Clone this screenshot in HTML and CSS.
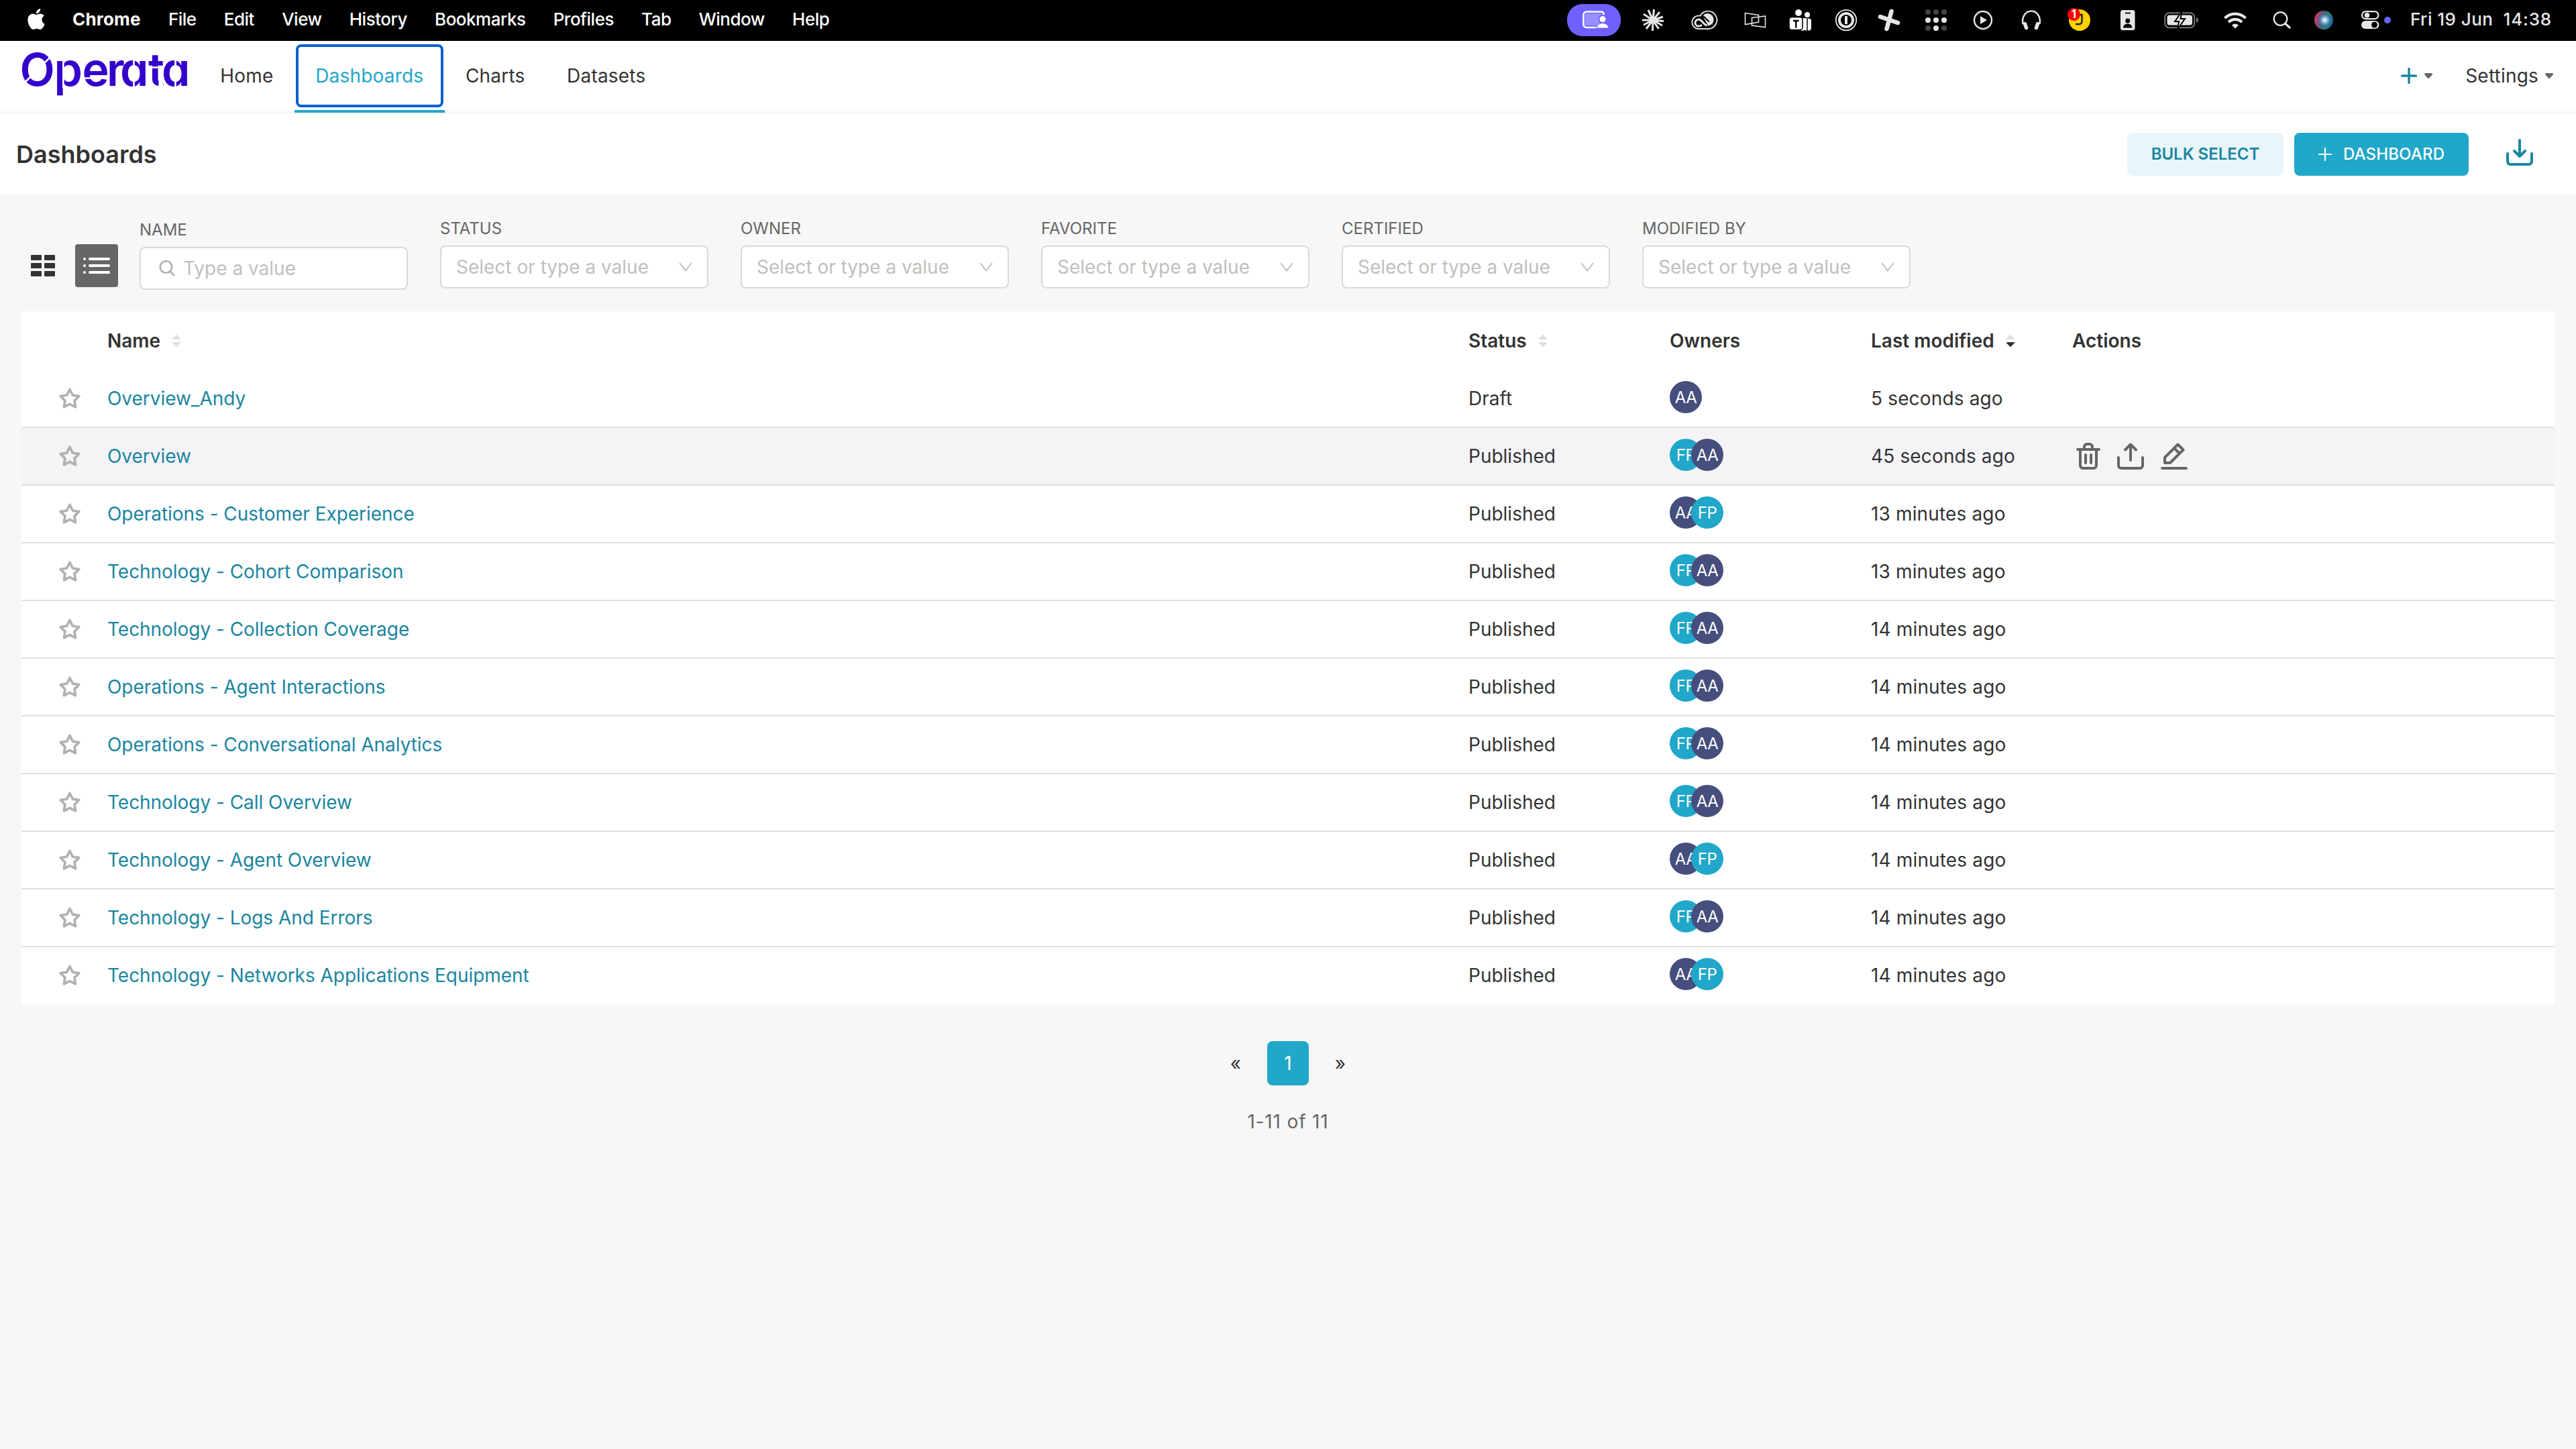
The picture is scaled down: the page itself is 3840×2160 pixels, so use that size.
FILE: index.html
```html
<!DOCTYPE html>
<html lang="en">
<head>
<meta charset="utf-8">
<title>Dashboards</title>
<link rel="stylesheet" href="styles.css">
</head>
<body>
<svg class="defs" aria-hidden="true">
  <symbol id="star" viewBox="0 0 32 32"><path d="M16 2.500 20.350 11.010 29.790 12.520 23.040 19.290 24.520 28.730 16 24.400 7.480 28.730 8.960 19.290 2.210 12.520 11.650 11.010Z" fill="none" stroke="#b2b2b2" stroke-width="3.800" stroke-linejoin="round"/></symbol>
  <symbol id="caret" viewBox="0 0 12 8"><path d="M1.5 0h9a1.5 1.5 0 0 1 1 2.6L7 7.4a1.4 1.4 0 0 1-2 0L.5 2.6A1.5 1.5 0 0 1 1.5 0Z" fill="currentColor"/></symbol>
  <symbol id="sort" viewBox="0 0 12 18"><path class="up" d="M1.5 7h9a1 1 0 0 0 .8-2L7 .6a1.4 1.4 0 0 0-2 0L.7 5a1 1 0 0 0 .8 2Z"/><path class="down" d="M1.5 11h9a1 1 0 0 1 .8 2L7 17.4a1.4 1.4 0 0 1-2 0L.7 13a1 1 0 0 1 .8-2Z"/></symbol>
  <symbol id="chevron" viewBox="0 0 20 14"><path d="M1 1 10 12.5 19 1" fill="none" stroke="currentColor" stroke-width="2"/></symbol>
</svg>

<header class="menubar">
  <svg class="apple" viewBox="2 0 20 24"><path fill="#fff" d="M12.152 6.896c-.948 0-2.415-1.078-3.96-1.04-2.04.027-3.91 1.183-4.961 3.014-2.117 3.675-.546 9.103 1.519 12.09 1.013 1.454 2.208 3.09 3.792 3.039 1.52-.065 2.09-.987 3.935-.987 1.831 0 2.35.987 3.96.948 1.637-.026 2.676-1.48 3.676-2.948 1.156-1.688 1.636-3.325 1.662-3.415-.039-.013-3.182-1.221-3.22-4.857-.026-3.04 2.48-4.494 2.597-4.559-1.429-2.09-3.623-2.324-4.39-2.376-2-.156-3.675 1.09-4.61 1.09zM15.53 3.83c.843-1.012 1.4-2.427 1.245-3.83-1.207.052-2.662.805-3.532 1.818-.78.896-1.454 2.338-1.273 3.714 1.338.104 2.715-.688 3.559-1.701"/></svg>
  <nav class="menus">
    <b>Chrome</b><span>File</span><span>Edit</span><span>View</span><span>History</span><span>Bookmarks</span><span>Profiles</span><span>Tab</span><span>Window</span><span>Help</span>
  </nav>
  <div class="tray">
    <svg width="110" height="61" viewBox="2330 0 110 61">
      <rect x="2336" y="6" width="80" height="48" rx="23" fill="#7060ff"/>
      <path d="M2380 41h-15a4.500 4.500 0 0 1-4.500-4.500v-14.500a4.500 4.500 0 0 1 4.500-4.500h22a3.500 3.500 0 0 1 3.500 3.500v1.500" fill="none" stroke="#fff" stroke-width="2.600"/>
      <rect x="2363" y="20" width="24" height="18" fill="#988eff"/>
      <circle cx="2389" cy="28.500" r="5.600" fill="#fff" stroke="#7060ff" stroke-width="2"/>
      <path d="M2380 42c0-4 4-7.500 9-7.500s9 3.500 9 7.500Z" fill="#fff" stroke="#7060ff" stroke-width="1"/>
    </svg>
    <svg width="60" height="61" viewBox="2440 0 60 61"><path d="M2464 30 2457 15M2464 30 2465.500 14M2464 30 2474 18M2464 30 2479 25M2464 30 2480 31.500M2464 30 2478 38M2464 30 2472.500 43M2464 30 2463.500 46M2464 30 2454 43M2464 30 2450 37M2464 30 2448 30M2464 30 2450 21" stroke="#e6e6e6" stroke-width="3"/><circle cx="2464" cy="30" r="5" fill="#e6e6e6"/></svg>
    <svg width="82" height="61" viewBox="2500 0 82 61" fill="none" stroke="#e6e6e6">
      <path d="M2532 43a9.800 9.800 0 1 1 2.500-19.300A13.200 13.200 0 1 1 2547 43Z" stroke-width="1.900"/>
      <path d="M2538 23.500a9.300 9.300 0 1 1 8.500 15Z" fill="#e6e6e6" stroke="none"/>
      <path d="M2545 38c-5 0-7.500-9-13-9a5 5 0 0 0 0 10c2 0 3.500-.6 5-2" stroke-width="3"/>
      <path d="M2537 23c4 1 6 6 11 9.500" stroke="#000" stroke-width="2"/>
    </svg>
    <svg width="68" height="61" viewBox="2582 0 68 61" fill="none" stroke="#e6e6e6" stroke-width="1.600"><path d="M2601.500 19.500 2621.500 22.500V33L2601.500 36.500ZM2611.500 26.500 2631.500 24V40.500L2611.500 38Z"/></svg>
    <svg width="76" height="61" viewBox="2650 0 76 61" fill="#fff">
      <circle cx="2681" cy="19" r="5"/><circle cx="2694" cy="22" r="4"/>
      <rect x="2689" y="27.500" width="11" height="18" rx="4"/><path d="M2694 28v18" stroke="#000" stroke-width="1.500"/>
      <path d="M2676 27h16v14a4.500 4.500 0 0 1-4.500 4.500H2684Z"/>
      <rect x="2667" y="25.500" width="20" height="19" rx="4" stroke="#000" stroke-width="1.600"/>
      <path d="M2673 31h8.500M2677.200 31v10.500" stroke="#000" stroke-width="2.400"/>
    </svg>
    <svg width="60" height="61" viewBox="2726 0 60 61"><circle cx="2752" cy="30" r="15.200" fill="none" stroke="#e6e6e6" stroke-width="1.800"/><circle cx="2752" cy="30" r="12" fill="#e6e6e6"/><circle cx="2752" cy="30" r="8" fill="#000"/><rect x="2750" y="24" width="4" height="12" fill="#e6e6e6"/></svg>
    <svg width="66" height="61" viewBox="2786 0 66 61" stroke="#e6e6e6" stroke-width="6.500" stroke-linecap="round"><path d="M2819.500 17 2812.500 43M2803 25 2829 34"/></svg>
    <svg width="72" height="61" viewBox="2852 0 72 61" fill="#444"><circle cx="2874" cy="18" r="4"/><circle cx="2886" cy="18" r="4"/><circle cx="2898" cy="18" r="4"/><circle cx="2874" cy="42" r="4"/><circle cx="2898" cy="42" r="4"/><g fill="#e6e6e6"><circle cx="2874" cy="30" r="4"/><circle cx="2886" cy="30" r="4"/><circle cx="2898" cy="30" r="4"/><circle cx="2886" cy="42" r="4"/></g></svg>
    <svg width="68" height="61" viewBox="2924 0 68 61"><circle cx="2956" cy="30" r="13" fill="none" stroke="#e6e6e6" stroke-width="2.400"/><path d="M2952 24v12l10-6Z" fill="#e6e6e6"/></svg>
    <svg width="72" height="61" viewBox="2992 0 72 61" fill="none" stroke="#e6e6e6"><path d="M3015.500 36c-2-11 4-19.500 12.500-19.500s14.500 8.500 12.500 19.500" stroke-width="2.500"/><path d="M3018.500 35.500 3020.500 41.500M3037.500 35.500 3035.500 41.500" stroke-width="5.500" stroke-linecap="round"/></svg>
    <svg width="76" height="61" viewBox="3064 0 76 61"><circle cx="3100" cy="30" r="16" fill="#ffd200"/><path d="M3094 36h5.500a4 4 0 0 0 4-4V22h-5" fill="none" stroke="#222" stroke-width="2.500"/><circle cx="3091.500" cy="21.500" r="9.500" fill="#f00"/><text x="3091.300" y="27" class="badge">1</text></svg>
    <svg width="66" height="61" viewBox="3140 0 66 61"><rect x="3161" y="15" width="21.500" height="30" rx="3.500" fill="#e6e6e6"/><path d="M3168 19.500h8" stroke="#000" stroke-width="1.800"/><circle cx="3171.700" cy="31" r="3.500"/><path d="M3165 41.500c0-4 3-6 6.700-6s6.700 2 6.700 6Z"/></svg>
    <svg width="90" height="61" viewBox="3206 0 90 61"><rect x="3227.200" y="19.200" width="44" height="22" rx="6.500" fill="none" stroke="#777" stroke-width="2"/><path d="M3274 26v8c2-.5 3-2 3-4s-1-3.500-3-4Z" fill="#777"/><rect x="3230.500" y="22.500" width="37.500" height="15" rx="3.500" fill="#e6e6e6"/><path d="M3252.500 17 3242 32h6l-2 11.500 11-15.500h-6.500Z" fill="#e6e6e6" stroke="#000" stroke-width="2"/></svg>
    <svg width="74" height="61" viewBox="3296 0 74 61" fill="none" stroke="#e6e6e6" stroke-width="4.200"><path d="M3316.500 27a22 22 0 0 1 31 0M3322 33a14 14 0 0 1 20 0"/><path d="M3332 42.500l-5-5a7 7 0 0 1 10 0Z" fill="#e6e6e6" stroke="none"/></svg>
    <svg width="62" height="61" viewBox="3370 0 62 61" fill="none" stroke="#e6e6e6" stroke-linecap="round"><circle cx="3399.500" cy="28" r="9.800" stroke-width="2.300"/><path d="M3406.500 35 3413 41" stroke-width="3.200"/></svg>
    <svg width="68" height="61" viewBox="3432 0 68 61"><defs><radialGradient id="siri" cx=".52" cy=".5" r=".5"><stop offset="0" stop-color="#fff"/><stop offset=".3" stop-color="#9ac6e8"/><stop offset=".75" stop-color="#3a6fa0" stop-opacity=".5"/><stop offset="1" stop-color="#446" stop-opacity="0"/></radialGradient><linearGradient id="ring" x1="0" y1=".3" x2="1" y2=".6"><stop offset="0" stop-color="#d13a6a"/><stop offset=".45" stop-color="#5b5a78"/><stop offset=".65" stop-color="#1f8f7a"/><stop offset="1" stop-color="#1f5fb0"/></linearGradient></defs><circle cx="3464" cy="30" r="14" fill="url(#ring)"/><circle cx="3465" cy="30" r="12" fill="url(#siri)"/></svg>
    <svg width="76" height="61" viewBox="3500 0 76 61"><rect x="3521" y="17.200" width="24.500" height="11" rx="5.500" fill="none" stroke="#e6e6e6" stroke-width="2.200"/><circle cx="3528.500" cy="22.700" r="3.800" fill="#e6e6e6"/><rect x="3520" y="31" width="26.500" height="12" rx="6" fill="#e6e6e6"/><circle cx="3539.500" cy="37" r="4.500" fill="#000"/><circle cx="3559" cy="30" r="5" fill="#6464f5"/></svg>
  </div>
  <div class="clock"><span>Fri 19 Jun</span><span class="time">14:38</span></div>
</header>

<header class="topnav">
  <svg class="logo" viewBox="0 0 297 105">
    <text class="wordmark" y="67" x="29.500 80.500 122.500 159 179 221 241">Operata</text>
    <path d="M67 32l11-11M35 64l11-11M94.300 28v42M123 55.500h36M199.500 28v10M199.500 58v10M221 39.500h22M261.500 28v10M261.500 58v10" stroke="#fff" stroke-width="2.600"/>
    <path d="M236.500 42h6.500v27h-6.500Z" fill="#fff"/>
  </svg>
  <nav class="tabs">
    <a class="tab">Home</a>
    <a class="tab current"><span class="focus">Dashboards</span></a>
    <a class="tab">Charts</a>
    <a class="tab">Datasets</a>
  </nav>
  <div class="account">
    <svg class="add" viewBox="0 0 24 24"><path d="M12 1.500v21M1.500 12h21" stroke="#1a85a0" stroke-width="3.400" stroke-linecap="round"/></svg>
    <svg class="caret c1"><use href="#caret"/></svg>
    <span class="settings">Settings</span>
    <svg class="caret"><use href="#caret"/></svg>
  </div>
</header>

<section class="titlebar">
  <h1>Dashboards</h1>
  <button class="btn soft">BULK SELECT</button>
  <button class="btn primary"><svg class="plus" viewBox="0 0 20 20"><path d="M10 1v18M1 10h18" stroke="#fff" stroke-width="2.200" stroke-linecap="round"/></svg>DASHBOARD</button>
  <svg class="import" viewBox="0 0 40 40" fill="none" stroke="#1a85a0" stroke-width="4" stroke-linecap="round" stroke-linejoin="round"><path d="M20 2v23M12 18l8 8 8-8M2 22v12a4 4 0 0 0 4 4h28a4 4 0 0 0 4-4V22"/></svg>
</section>

<main>
  <section class="filters">
    <div class="toggle">
      <span class="view"><svg width="36" height="32" viewBox="0 0 36 32" fill="#333"><rect width="16" height="8" rx="1"/><rect x="20" width="16" height="8" rx="1"/><rect y="12" width="16" height="8" rx="1"/><rect x="20" y="12" width="16" height="8" rx="1"/><rect y="24" width="16" height="8" rx="1"/><rect x="20" y="24" width="16" height="8" rx="1"/></svg></span>
      <span class="view on"><svg width="40" height="24" viewBox="0 0 40 24" fill="#fff"><rect width="4" height="4" rx="2"/><rect x="8" width="32" height="4" rx="2"/><rect y="10" width="4" height="4" rx="2"/><rect x="8" y="10" width="32" height="4" rx="2"/><rect y="20" width="4" height="4" rx="2"/><rect x="8" y="20" width="32" height="4" rx="2"/></svg></span>
    </div>
    <div class="filter search"><label>NAME</label><div class="field"><svg class="glass" viewBox="0 0 24 24" fill="none" stroke="#b0b0b0" stroke-width="2.600"><circle cx="10.500" cy="10" r="8.800"/><path d="M16.500 16.500 23 23"/></svg><span>Type a value</span></div></div>
    <div class="filter"><label>STATUS</label><div class="field"><span>Select or type a value</span><svg class="chevron"><use href="#chevron"/></svg></div></div>
    <div class="filter"><label>OWNER</label><div class="field"><span>Select or type a value</span><svg class="chevron"><use href="#chevron"/></svg></div></div>
    <div class="filter"><label>FAVORITE</label><div class="field"><span>Select or type a value</span><svg class="chevron"><use href="#chevron"/></svg></div></div>
    <div class="filter"><label>CERTIFIED</label><div class="field"><span>Select or type a value</span><svg class="chevron"><use href="#chevron"/></svg></div></div>
    <div class="filter"><label>MODIFIED BY</label><div class="field"><span>Select or type a value</span><svg class="chevron"><use href="#chevron"/></svg></div></div>
  </section>

  <section class="table">
    <div class="row head"><span></span><span>Name<svg class="sort"><use href="#sort"/></svg></span><span>Status<svg class="sort"><use href="#sort"/></svg></span><span>Owners</span><span>Last modified<svg class="sort desc"><use href="#sort"/></svg></span><span>Actions</span></div>
    <div class="row"><svg class="star"><use href="#star"/></svg><a>Overview_Andy</a><span>Draft</span><span class="owners"><i class="aa">AA</i></span><span class="ago">5 seconds ago</span></div>
    <div class="row hover"><svg class="star"><use href="#star"/></svg><a>Overview</a><span>Published</span><span class="owners"><i class="fp">FP</i><i class="aa">AA</i></span><span class="ago">45 seconds ago</span>
      <span class="actions">
        <svg width="36" height="40" viewBox="0 0 36 40" fill="none" stroke="#666" stroke-width="4" stroke-linecap="round" stroke-linejoin="round"><path d="M2 10h32M6 10v24a4 4 0 0 0 4 4h16a4 4 0 0 0 4-4V10M12 9V6a4 4 0 0 1 4-4h4a4 4 0 0 1 4 4v3M14 18v12M22 18v12"/></svg>
        <svg width="40" height="40" viewBox="0 0 40 40" fill="none" stroke="#666" stroke-width="4" stroke-linecap="round" stroke-linejoin="round"><path d="M20 26V3M12 10.500l8-8 8 8M2 22v12a4 4 0 0 0 4 4h28a4 4 0 0 0 4-4V22"/></svg>
        <svg width="40" height="40" viewBox="0 0 40 40" fill="none" stroke="#666" stroke-width="4" stroke-linecap="round" stroke-linejoin="round"><path d="M2 38h36"/><path d="M6 30v-8L25.500 2.500l8 8L14 30ZM20.500 8.500l7.500 7.500" stroke-linecap="butt"/></svg>
      </span></div>
    <div class="row"><svg class="star"><use href="#star"/></svg><a>Operations - Customer Experience</a><span>Published</span><span class="owners"><i class="aa">AA</i><i class="fp">FP</i></span><span class="ago">13 minutes ago</span></div>
    <div class="row"><svg class="star"><use href="#star"/></svg><a>Technology - Cohort Comparison</a><span>Published</span><span class="owners"><i class="fp">FP</i><i class="aa">AA</i></span><span class="ago">13 minutes ago</span></div>
    <div class="row"><svg class="star"><use href="#star"/></svg><a>Technology - Collection Coverage</a><span>Published</span><span class="owners"><i class="fp">FP</i><i class="aa">AA</i></span><span class="ago">14 minutes ago</span></div>
    <div class="row"><svg class="star"><use href="#star"/></svg><a>Operations - Agent Interactions</a><span>Published</span><span class="owners"><i class="fp">FP</i><i class="aa">AA</i></span><span class="ago">14 minutes ago</span></div>
    <div class="row"><svg class="star"><use href="#star"/></svg><a>Operations - Conversational Analytics</a><span>Published</span><span class="owners"><i class="fp">FP</i><i class="aa">AA</i></span><span class="ago">14 minutes ago</span></div>
    <div class="row"><svg class="star"><use href="#star"/></svg><a>Technology - Call Overview</a><span>Published</span><span class="owners"><i class="fp">FP</i><i class="aa">AA</i></span><span class="ago">14 minutes ago</span></div>
    <div class="row"><svg class="star"><use href="#star"/></svg><a>Technology - Agent Overview</a><span>Published</span><span class="owners"><i class="aa">AA</i><i class="fp">FP</i></span><span class="ago">14 minutes ago</span></div>
    <div class="row"><svg class="star"><use href="#star"/></svg><a>Technology - Logs And Errors</a><span>Published</span><span class="owners"><i class="fp">FP</i><i class="aa">AA</i></span><span class="ago">14 minutes ago</span></div>
    <div class="row"><svg class="star"><use href="#star"/></svg><a>Technology - Networks Applications Equipment</a><span>Published</span><span class="owners"><i class="aa">AA</i><i class="fp">FP</i></span><span class="ago">14 minutes ago</span></div>
  </section>

  <nav class="pager"><span class="step">«</span><span class="page">1</span><span class="step">»</span></nav>
  <p class="count">1-11 of 11</p>
</main>
</body>
</html>
```
FILE: styles.css
```css
* { box-sizing: border-box; }
body {
  margin: 0;
  min-height: 2160px;
  background: #f7f7f7;
  color: #333;
  font: 400 28px/40px Inter, "Liberation Sans", sans-serif;
}
svg { display: block; flex: none; }
.defs { display: none; }

/* System menu bar */
.menubar {
  display: flex;
  height: 61px;
  padding: 0 36px 0 41px;
  background: #000;
  color: #fff;
  font-size: 26px;
  font-weight: 500;
  line-height: 57px;
  letter-spacing: -0.5px;
  white-space: pre;
}
.apple { width: 26px; height: 31px; margin-top: 13px; }
.menus { display: flex; gap: 41.2px; margin-left: 41px; }
.menus b { font-weight: 700; letter-spacing: 0.2px; }
.tray { display: flex; margin-left: auto; }
.badge { font: 700 17px Inter, sans-serif; letter-spacing: 0; fill: #fff; text-anchor: middle; }
.clock { display: flex; justify-content: space-between; width: 211px; margin-left: 17px; color: #e6e6e6; letter-spacing: 0.45px; }
.time { letter-spacing: 0.8px; }

/* Application navigation */
.topnav {
  display: flex;
  height: 109px;
  background: #fff;
  border-bottom: 4px solid #f7f7f7;
}
.logo { width: 297px; height: 105px; overflow: visible; }
.wordmark { font: 600 68px Inter, sans-serif; font-feature-settings: "cv11"; fill: #3400cc; }
.tabs { display: flex; letter-spacing: 0.2px; }
.tab { height: 107px; padding: 0 31.3px; line-height: 104px; }
.current { padding: 5px 2px 0; border-bottom: 4px solid #20a7c9; color: #20a7c9; }
.focus { display: block; height: 94px; padding: 0 25.3px; border: 4px solid #0060d0; border-radius: 8px; line-height: 86px; }
.account { display: flex; align-items: center; height: 104px; margin-left: auto; padding-right: 34px; }
.add { width: 24px; height: 24px; }
.caret { width: 12px; height: 8px; margin-left: 10px; color: #666; }
.c1 { margin-left: 11px; }
.settings { margin-left: 49px; letter-spacing: 0.2px; }

/* Page title and actions */
.titlebar {
  display: flex;
  align-items: center;
  height: 120px;
  padding: 0 64px 0 24px;
  background: #fff;
}
h1 { margin: 0 auto 0 0; font-size: 36px; font-weight: 600; line-height: 48px; }
.btn {
  display: flex;
  align-items: center;
  justify-content: center;
  height: 64px;
  padding: 0;
  border: 0;
  border-radius: 8px;
  font: 600 24px/32px Inter, sans-serif;
}
.soft { width: 233px; background: #e9f6f9; color: #1a85a0; }
.primary { width: 260px; margin-left: 16px; gap: 17px; background: #20a7c9; color: #fff; font-weight: 500; letter-spacing: 0.15px; }
.plus { width: 20px; height: 20px; }
.import { width: 40px; height: 40px; margin-left: 56px; margin-top: -6px; }

/* Filters */
.filters { display: flex; height: 174px; padding-left: 32px; }
.toggle { display: flex; gap: 16px; margin: 74px 32px 0 0; }
.view { display: flex; align-items: center; justify-content: center; width: 64px; height: 64px; border-radius: 4px; }
.on { background: #666; }
.filter { width: 400px; margin: 34px 48px 0 0; }
.search { margin-top: 36px; }
label { display: block; height: 42px; color: #666; font-size: 24px; line-height: 34px; }
.field {
  display: flex;
  align-items: center;
  justify-content: space-between;
  height: 64px;
  padding: 0 22px;
  border: 2px solid #d9d9d9;
  border-radius: 8px;
  background: #fff;
  color: #bfbfbf;
}
.search .field { justify-content: flex-start; gap: 12px; padding-left: 27px; }
.glass { width: 24px; height: 24px; }
.chevron { width: 20px; height: 14px; }

/* Table */
.table { margin: 0 32px; background: #fff; }
.row {
  display: grid;
  grid-template-columns: 128px 2029px 300px 300px 300px 1fr;
  align-items: center;
  height: 86px;
  border-bottom: 2px solid #e0e0e0;
}
.row:last-child { height: 84px; border-bottom: 0; }
.head { height: 88px; border: 0; font-weight: 600; }
.head > span { display: flex; align-items: center; }
.hover { background: #f4f4f7; }
.row a { color: #1a85a0; letter-spacing: -0.04px; }
.ago { letter-spacing: 0.15px; }
.star { width: 32px; height: 32px; margin-left: 56px; }
.sort { width: 12px; height: 18px; margin-left: 18px; fill: #e0e0e0; }
.desc { --down: #333; }
.down { fill: var(--down, #e0e0e0); }
.owners { display: flex; margin-top: -4px; }
.owners i {
  width: 48px;
  height: 48px;
  border-radius: 50%;
  color: #fff;
  font-size: 24px;
  font-style: normal;
  line-height: 50px;
  letter-spacing: -0.5px;
  text-align: center;
}
.owners i + i { margin-left: -16px; }
.aa { background: #454e7c; }
.fp { background: #20a7c9; }
.actions { display: flex; gap: 25px; margin-left: 6px; }

/* Pagination */
.pager { display: flex; align-items: center; justify-content: center; gap: 38px; margin-top: 56px; height: 66px; }
.page { width: 62px; height: 66px; border-radius: 8px; background: #20a7c9; color: #fff; line-height: 66px; text-align: center; }
.step { width: 18px; text-align: center; line-height: 42px; }
.count { margin: 34px 0 0; color: #666; letter-spacing: 0.85px; text-align: center; }
```
